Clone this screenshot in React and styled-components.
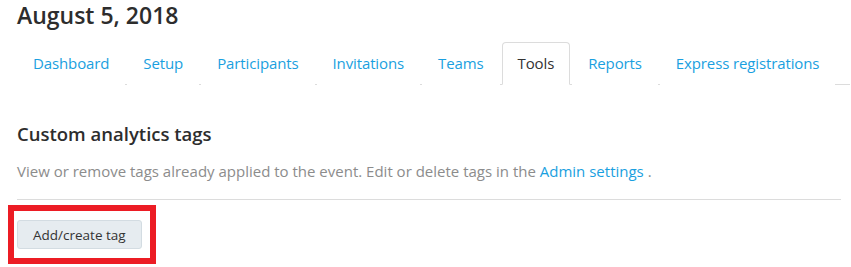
import React from "react";
import styled, { createGlobalStyle } from "styled-components";

const Global = createGlobalStyle`
  html, body { margin: 0; padding: 0; background: #fff; }
  body { font-family: "Open Sans", "Liberation Sans", sans-serif; color: #333; }
  * { box-sizing: border-box; }
`;

const Page = styled.div`
  width: 851px;
  height: 267px;
  overflow: hidden;
  padding: 0 1px 0 17px;
`;

const Title = styled.h1`
  margin: 0;
  height: 42px;
  font-size: 23px;
  line-height: 30px;
  font-weight: 600;
  color: #2d2d2d;
`;

const TabList = styled.ul`
  display: flex;
  list-style: none;
  margin: 0;
  padding: 0;
  border-bottom: 1px solid #dcdcdc;
`;

const Tab = styled.li`
  margin: 0 2px -1px 0;
  padding: 10px 15px;
  line-height: 21px;
  font-size: 15px;
  letter-spacing: -0.12px;
  color: ${(p) => (p.$active ? "#333" : "#1a9fe0")};
  background: #fff;
  border: 1px solid ${(p) => (p.$active ? "#dcdcdc" : "transparent")};
  border-bottom-color: ${(p) => (p.$active ? "#fff" : "transparent")};
  border-radius: 4px 4px 0 0;
`;

const Section = styled.section`
  padding-top: 37px;
  padding-right: 9px;
`;

const Heading = styled.h2`
  margin: 0;
  font-size: 18.5px;
  line-height: 24px;
  font-weight: 600;
  color: #2d2d2d;
`;

const Desc = styled.p`
  margin: 0;
  padding: 15px 0 18px;
  font-size: 15px;
  line-height: 20px;
  color: #8c8c8c;
  border-bottom: 1px solid #dcdcdc;
`;

const Link = styled.a`
  color: #1a9fe0;
  text-decoration: none;
`;

const Highlight = styled.div`
  display: inline-block;
  margin: 5px 0 0 -9px;
  border: 6px solid #ec1c24;
  padding: 9px 8px 9px 3px;
`;

const Button = styled.button`
  display: block;
  height: 29px;
  padding: 0 15px;
  font-family: inherit;
  font-size: 13.5px;
  color: #333;
  background: #e6ecf0;
  border: 1px solid #d3dce2;
  border-radius: 3px;
`;

const tabs = [
  "Dashboard",
  "Setup",
  "Participants",
  "Invitations",
  "Teams",
  "Tools",
  "Reports",
  "Express registrations",
];

export default function App() {
  return (
    <Page>
      <Global />
      <Title>August 5, 2018</Title>
      <TabList>
        {tabs.map((t) => (
          <Tab key={t} $active={t === "Tools"}>
            {t}
          </Tab>
        ))}
      </TabList>
      <Section>
        <Heading>Custom analytics tags</Heading>
        <Desc>
          View or remove tags already applied to the event. Edit or delete tags
          in the <Link href="#">Admin settings</Link> .
        </Desc>
        <Highlight>
          <Button>Add/create tag</Button>
        </Highlight>
      </Section>
    </Page>
  );
}
